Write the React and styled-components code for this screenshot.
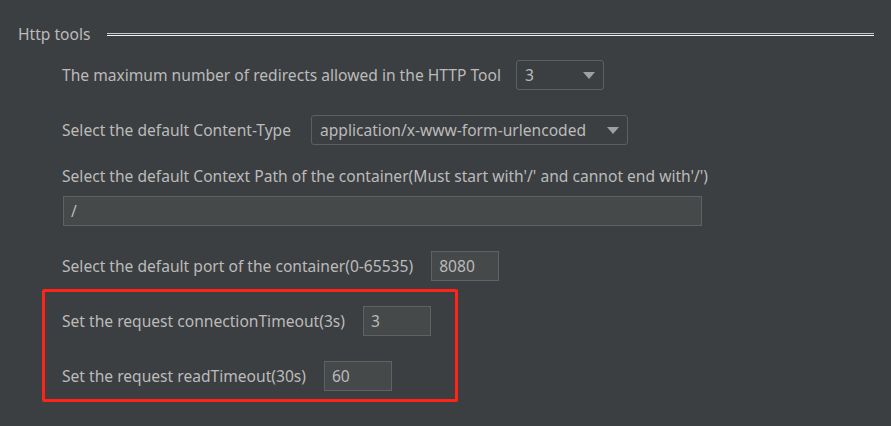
import React from 'react'
import styled, { createGlobalStyle } from 'styled-components'

const Global = createGlobalStyle`
  html, body {
    margin: 0;
    background: #3c3f41;
  }
  body {
    font-family: "Noto Sans", "Open Sans", sans-serif;
    color: #bbbbbb;
  }
`

const Page = styled.div`
  width: 891px;
  height: 426px;
  padding: 24px 17px 0 18px;
  box-sizing: border-box;
  background: #3c3f41;
`

const Legend = styled.div`
  display: flex;
  align-items: center;
  gap: 17px;
  height: 20px;
  font-size: 15.6px;
  line-height: 20px;
`

const DoubleLine = styled.div`
  flex: 1;
  height: 1px;
  border-top: 1px solid #c8c8c8;
  border-bottom: 1px solid #f2f2f2;
`

const Body = styled.div`
  display: flex;
  flex-direction: column;
  padding-left: 44px;
  padding-top: 16px;
`

const Row = styled.div`
  display: flex;
  align-items: center;
  gap: ${p => p.$gap || 18}px;
  height: 30px;
  margin-top: ${p => p.$top || 0}px;
`

const Label = styled.span`
  font-size: 15.6px;
  line-height: 20px;
  white-space: nowrap;
  margin-top: ${p => p.$top || 0}px;
`

const Select = styled.div`
  box-sizing: border-box;
  width: ${p => p.$w}px;
  height: 30px;
  border: 1px solid #5e6060;
  border-radius: 3px;
  display: flex;
  align-items: center;
  justify-content: space-between;
  padding: 0 8px;
  font-size: 15.6px;
  color: #bbbbbb;
  background: #3c3f41;
`

const Arrow = styled.span`
  width: 0;
  height: 0;
  border-left: 6px solid transparent;
  border-right: 6px solid transparent;
  border-top: 7px solid #a0a0a0;
`

const Field = styled.div`
  box-sizing: border-box;
  width: ${p => p.$w}px;
  height: 30px;
  border: 1px solid #5e6262;
  background: #45494a;
  display: flex;
  align-items: center;
  padding-left: 7px;
  font-size: 15.6px;
  color: #bbbbbb;
  margin-left: ${p => p.$left || 0}px;
  margin-top: ${p => p.$top || 0}px;
`

const Highlight = styled.div`
  display: flex;
  flex-direction: column;
  width: 416px;
  box-sizing: border-box;
  margin-left: -20px;
  margin-top: 8px;
  border: 3px solid #ff2318;
  border-radius: 2px;
  padding: 14px 0 8px 17px;
`

export default function App() {
  return (
    <>
      <Global />
      <Page>
        <Legend>
          <span>Http tools</span>
          <DoubleLine />
        </Legend>
        <Body>
          <Row $gap={15}>
            <Label>The maximum number of redirects allowed in the HTTP Tool</Label>
            <Select $w={88}>3<Arrow /></Select>
          </Row>
          <Row $top={25} $gap={20}>
            <Label>Select the default Content-Type</Label>
            <Select $w={317}>application/x-www-form-urlencoded<Arrow /></Select>
          </Row>
          <Label $top={21}>Select the default Context Path of the container(Must start with'/' and cannot end with'/')</Label>
          <Field $w={639} $left={1} $top={10}>/</Field>
          <Row $top={25}>
            <Label>Select the default port of the container(0-65535)</Label>
            <Field $w={68}>8080</Field>
          </Row>
          <Highlight>
            <Row>
              <Label>Set the request connectionTimeout(3s)</Label>
              <Field $w={68}>3</Field>
            </Row>
            <Row $top={25}>
              <Label>Set the request readTimeout(30s)</Label>
              <Field $w={68}>60</Field>
            </Row>
          </Highlight>
        </Body>
      </Page>
    </>
  )
}
